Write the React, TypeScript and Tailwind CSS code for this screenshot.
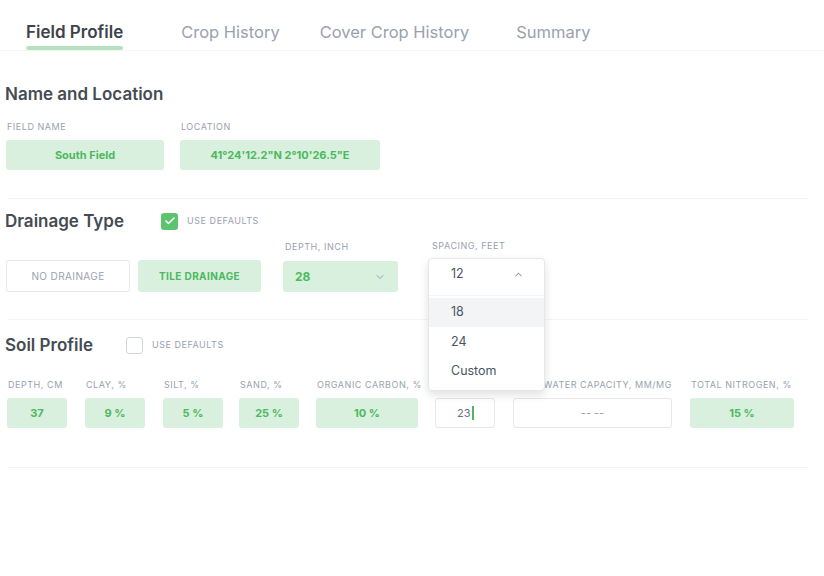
import { ChevronDown, ChevronUp, Check } from "lucide-react";

const Label = ({ children, className = "" }: { children: React.ReactNode; className?: string }) => (
  <div className={`text-[9px] leading-[12px] tracking-[0.06em] uppercase text-gray-400 whitespace-nowrap ${className}`}>
    {children}
  </div>
);

const GreenBox = ({ value, w }: { value: string; w: string }) => (
  <div className={`${w} h-[30px] rounded-[3px] bg-[#d9f0de] flex items-center justify-center text-[11px] font-bold text-[#4cb860]`}>
    {value}
  </div>
);

const Field = ({ label, value, w }: { label: string; value: string; w: string }) => (
  <div className={`${w} flex flex-col gap-[7px]`}>
    <Label className="pl-[1px]">{label}</Label>
    <GreenBox value={value} w={w} />
  </div>
);

const Divider = ({ className = "" }: { className?: string }) => (
  <div className={`mx-[3px] w-[800px] h-px bg-gray-100 ${className}`} />
);

export default function App() {
  const tabs = [
    { name: "Field Profile", ml: "ml-[26px]", active: true },
    { name: "Crop History", ml: "ml-[58px]" },
    { name: "Cover Crop History", ml: "ml-[40px]" },
    { name: "Summary", ml: "ml-[47px]" },
  ];

  return (
    <div className="w-[824px] h-[576px] bg-white overflow-hidden" style={{ fontFamily: "Inter, 'Noto Sans', sans-serif" }}>
      {/* Tabs */}
      <div className="flex border-b border-gray-100 h-[51px]">
        {tabs.map((t) => (
          <div key={t.name} className={`${t.ml} flex flex-col pt-[21px]`}>
            <span
              className={`leading-[22px] whitespace-nowrap ${
                t.active ? "text-[17px] font-semibold text-[#3d434b]" : "text-[16.5px] text-gray-400"
              }`}
            >
              {t.name}
            </span>
            {t.active && <div className="mt-[3px] h-[4px] rounded-full bg-[#b5e3bf]" />}
          </div>
        ))}
      </div>

      <div className="px-[5px]">
        {/* Name and Location */}
        <h2 className="mt-[32px] text-[17px] leading-[22px] font-semibold text-[#454b53]">Name and Location</h2>
        <div className="mt-[16px] flex gap-[16px] pl-[1px]">
          <Field label="Field Name" value="South Field" w="w-[158px]" />
          <Field label="Location" value={`41°24'12.2"N 2°10'26.5"E`} w="w-[200px]" />
        </div>

        <Divider className="mt-[28px]" />

        {/* Drainage Type */}
        <div className="mt-[11px] flex items-center h-[22px]">
          <h2 className="text-[17px] leading-[22px] font-semibold text-[#454b53]">Drainage Type</h2>
          <div className="ml-[37px] w-[17px] h-[17px] rounded-[3px] bg-[#5cc46e] flex items-center justify-center">
            <Check className="w-[12px] h-[12px] text-white" strokeWidth={3} />
          </div>
          <span className="ml-[9px] text-[9px] tracking-[0.06em] text-gray-400">USE DEFAULTS</span>
        </div>

        <div className="mt-[8px] flex items-end pl-[1px]">
          <div className="w-[124px] h-[32px] rounded-[3px] border border-gray-200 bg-white flex items-center justify-center text-[10px] tracking-[0.04em] text-gray-400">
            NO DRAINAGE
          </div>
          <div className="ml-[8px] w-[123px] h-[32px] rounded-[3px] bg-[#d9f0de] flex items-center justify-center text-[10px] font-bold tracking-[0.04em] text-[#4cb860]">
            TILE DRAINAGE
          </div>
          <div className="ml-[22px] flex flex-col gap-[8px]">
            <Label className="pl-[2px]">Depth, inch</Label>
            <div className="w-[115px] h-[31px] rounded-[3px] bg-[#d9f0de] flex items-center justify-between px-[12px] text-[12px] font-bold text-[#4cb860]">
              28
              <ChevronDown className="w-[12px] h-[12px] text-gray-400" />
            </div>
          </div>
          <div className="ml-[30px] flex flex-col gap-[8px]">
            <Label className="pl-[4px]">Spacing, feet</Label>
            <div className="relative w-[117px] h-[32px]">
              <div className="absolute left-0 top-[-2px] w-[117px] rounded-[4px] border border-gray-200 bg-white shadow-[0_4px_10px_rgba(0,0,0,0.12)] z-10">
                <div className="h-[37px] flex items-center justify-between pl-[22px] pr-[20px] pb-[5px] text-[12.5px] text-gray-600 border-b border-gray-100">
                  12
                  <ChevronUp className="w-[11px] h-[11px] text-gray-500" />
                </div>
                <div className="pt-[2px] pb-[4px] text-[12.5px] text-gray-600">
                  <div className="h-[29px] flex items-center pl-[22px] bg-gray-100">18</div>
                  <div className="h-[30px] flex items-center pl-[22px]">24</div>
                  <div className="h-[29px] flex items-center pl-[22px]">Custom</div>
                </div>
              </div>
            </div>
          </div>
        </div>

        <Divider className="mt-[27px]" />

        {/* Soil Profile */}
        <div className="mt-[14px] flex items-center h-[22px]">
          <h2 className="text-[17px] leading-[22px] font-semibold text-[#454b53]">Soil Profile</h2>
          <div className="ml-[33px] w-[17px] h-[17px] rounded-[3px] border border-gray-300 bg-white" />
          <span className="ml-[9px] text-[9px] tracking-[0.06em] text-gray-400">USE DEFAULTS</span>
        </div>

        <div className="mt-[23px] flex pl-[2px]">
          <Field label="Depth, cm" value="37" w="w-[60px]" />
          <div className="ml-[18px]">
            <Field label="Clay, %" value="9 %" w="w-[60px]" />
          </div>
          <div className="ml-[18px]">
            <Field label="Silt, %" value="5 %" w="w-[60px]" />
          </div>
          <div className="ml-[16px]">
            <Field label="Sand, %" value="25 %" w="w-[60px]" />
          </div>
          <div className="ml-[17px]">
            <Field label="Organic Carbon, %" value="10 %" w="w-[102px]" />
          </div>
          <div className="ml-[17px] w-[60px] flex flex-col gap-[7px]">
            <Label>pH</Label>
            <div className="w-[60px] h-[30px] rounded-[3px] border border-gray-200 bg-white flex items-center pl-[21px] text-[11px] text-gray-500">
              23<span className="ml-[1px] w-[2px] h-[14px] bg-[#4cb860]" />
            </div>
          </div>
          <div className="ml-[18px] w-[159px] flex flex-col gap-[7px]">
            <Label>Field Water Capacity, mm/mg</Label>
            <div className="w-[159px] h-[30px] rounded-[3px] border border-gray-200 bg-white flex items-center justify-center text-[11px] text-gray-400">
              -- --
            </div>
          </div>
          <div className="ml-[18px]">
            <Field label="Total Nitrogen, %" value="15 %" w="w-[104px]" />
          </div>
        </div>

        <Divider className="mt-[39px]" />
      </div>
    </div>
  );
}
